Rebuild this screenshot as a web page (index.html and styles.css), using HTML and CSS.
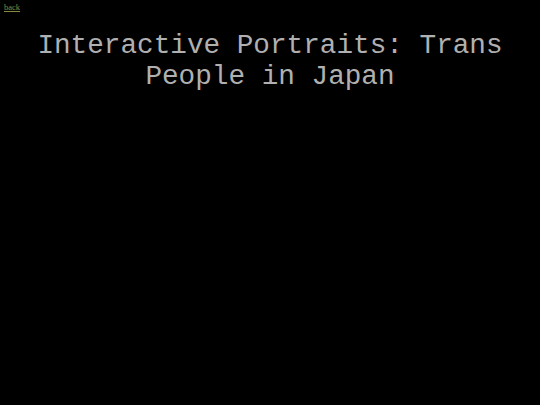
FILE: index.html
```html
<!DOCTYPE html>
<html>
<head>
<meta charset="utf-8">
<link rel="stylesheet" href="styles.css">
</head>
<body>
<a class="back" href="#">back</a>
<h1 class="title">Interactive Portraits: Trans People in Japan</h1>
</body>
</html>
```

FILE: styles.css
```css
html, body {
  margin: 0;
  padding: 0;
  background: #000;
}
body {
  padding: 3px 4px;
  height: 405px;
  box-sizing: border-box;
}
.back {
  display: block;
  font-family: "Liberation Serif", serif;
  font-size: 8.5px;
  line-height: 9px;
  color: #8a8a3c;
}
.title {
  margin: 18px auto 0;
  width: 480px;
  text-align: center;
  font-family: "Liberation Mono", "DejaVu Sans Mono", monospace;
  font-weight: normal;
  font-size: 27.7px;
  line-height: 31px;
  color: #b0b0b0;
  letter-spacing: 0;
}
```
